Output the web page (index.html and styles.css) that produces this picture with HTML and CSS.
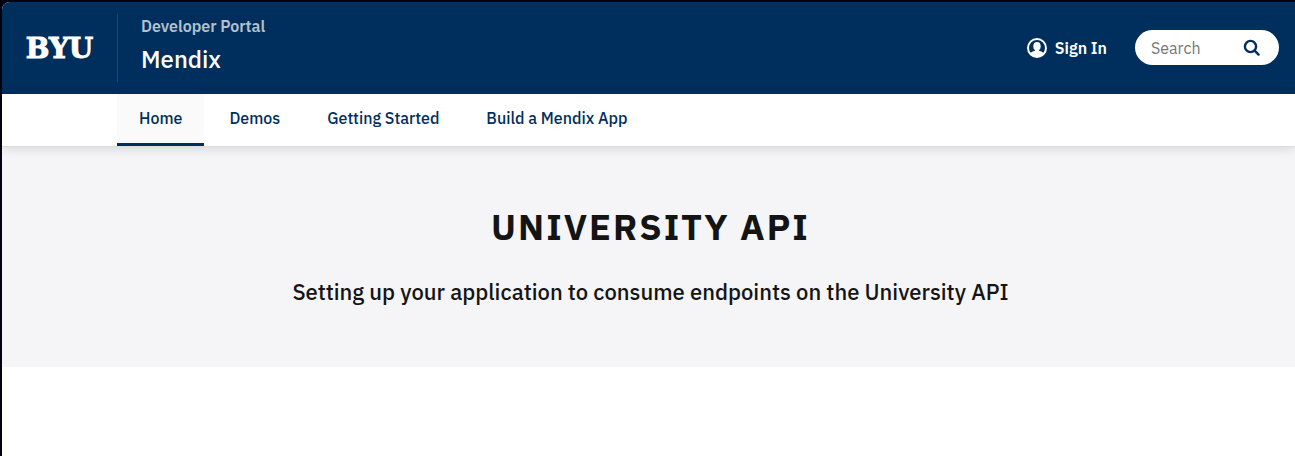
FILE: index.html
```html
<!DOCTYPE html>
<html lang="en">
<head>
    <meta charset="UTF-8">
    <meta name="viewport" content="width=device-width, initial-scale=1.0">
    <title>University API | Mendix</title>
    <link rel="stylesheet" href="styles.css">
</head>
<body>
    <div class="page">
        <header class="header">
            <a href="#" class="logo">BYU</a>
            <div class="titles">
                <a href="#" class="portal">Developer Portal</a>
                <a href="#" class="site">Mendix</a>
            </div>
            <a href="#" class="signin">
                <svg class="user" viewBox="0 0 20 20" aria-hidden="true">
                    <circle cx="10" cy="10" r="9" fill="none" stroke="#fff" stroke-width="2"/>
                    <ellipse cx="10" cy="8.3" rx="3.7" ry="4.3" fill="#fff"/>
                    <path d="M3 15.4 Q4.6 13.6 8 12.8 L8 11 L12 11 L12 12.8 Q15.4 13.6 17 15.4 L15.2 17.4 Q13.2 19 10 19 Q6.8 19 4.8 17.4Z" fill="#fff"/>
                </svg>
                <span>Sign In</span>
            </a>
            <form class="search">
                <input type="search" name="q" placeholder="Search" aria-label="Search">
                <button type="submit" aria-label="Submit search">
                    <svg viewBox="0 0 18 18" aria-hidden="true">
                        <circle cx="7.5" cy="7.5" r="5.6"/>
                        <path d="M11.6 11.6 L15.6 15.6"/>
                    </svg>
                </button>
            </form>
        </header>
        <nav class="menu">
            <a href="#" class="active">Home</a>
            <a href="#">Demos</a>
            <a href="#">Getting Started</a>
            <a href="#">Build a Mendix App</a>
        </nav>
        <main>
            <section class="hero">
                <h1>University API</h1>
                <p>Setting up your application to consume endpoints on the University API</p>
            </section>
        </main>
    </div>
</body>
</html>
```

FILE: styles.css
```css
* {
    box-sizing: border-box;
}

body {
    margin: 0;
    background: #03020f;
    font-family: "IBM Plex Sans", "Noto Sans", sans-serif;
    font-size: 16px;
    color: #141414;
}

a {
    color: inherit;
    text-decoration: none;
}

.page {
    min-height: 100vh;
    border-top: 2px solid #03020f;
    border-left: 2px solid #03020f;
    border-top-left-radius: 10px;
    background: #fff;
    overflow: hidden;
}

/* Header */
.header {
    display: flex;
    align-items: center;
    height: 92px;
    padding: 0 16px 1px 0;
    background: #002e5d;
    color: #fff;
}

.logo {
    width: 115px;
    padding-top: 2px;
    text-align: center;
    font-family: "DejaVu Serif", serif;
    font-size: 28px;
    font-weight: 900;
    -webkit-text-stroke: 1px #fff;
}

.titles {
    display: flex;
    flex-direction: column;
    height: 68px;
    padding-left: 23px;
    border-left: 1px solid #0047ba;
}

.portal {
    font-weight: 600;
    line-height: 24px;
    color: #b3c0ce;
}

.site {
    font-size: 24px;
    font-weight: 500;
    line-height: 42px;
}

.signin {
    display: flex;
    align-items: center;
    gap: 8px;
    margin-left: auto;
    margin-right: 28px;
    font-weight: 600;
}

.user {
    width: 20px;
    height: 20px;
}

.search {
    display: flex;
    align-items: center;
    width: 144px;
    height: 35px;
    padding: 0 18px 0 16px;
    border-radius: 18px;
    background: #fff;
}

.search input {
    flex: 1;
    min-width: 0;
    padding: 0;
    border: none;
    outline: none;
    background: transparent;
    font: inherit;
}

.search input::placeholder {
    color: #767676;
}

.search button {
    display: flex;
    padding: 0;
    border: none;
    background: none;
    cursor: pointer;
}

.search svg {
    width: 18px;
    height: 18px;
    fill: none;
    stroke: #002e5d;
    stroke-width: 2.4;
    stroke-linecap: round;
}

/* Menu */
.menu {
    position: relative;
    display: flex;
    gap: 3px;
    padding-left: 115px;
    border-bottom: 1px solid #dcdcdc;
    background: #fff;
    box-shadow: 0 2px 10px rgba(0, 0, 0, 0.12);
    color: #002e5d;
}

.menu a {
    padding: 0 22px;
    border-bottom: 3px solid transparent;
    font-weight: 500;
    line-height: 49px;
}

.menu .active {
    border-bottom-color: #002e5d;
    background: #fafafa;
}

/* Hero */
.hero {
    padding: 56px 24px 58px 28px;
    background: #f5f5f8;
    text-align: center;
}

.hero h1 {
    margin: 0 0 24px;
    font-size: 36px;
    line-height: 48px;
    letter-spacing: 2px;
    text-transform: uppercase;
}

.hero p {
    margin: 0;
    font-size: 22px;
    font-weight: 500;
    line-height: 34px;
}
```
